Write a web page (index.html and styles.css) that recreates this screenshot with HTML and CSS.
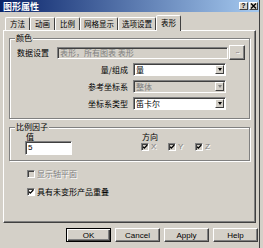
FILE: index.html
```html
<!DOCTYPE html>
<html lang="zh">
<head>
    <meta charset="utf-8">
    <title>图形属性</title>
    <link rel="stylesheet" href="styles.css">
</head>
<body>
<div class="window">
    <div class="titlebar">
        <span class="title">图形属性</span>
        <div class="tb-buttons">
            <span class="tb-btn help">?</span>
            <span class="tb-btn close">
                <svg width="7" height="6" viewBox="0 0 7 6"><path d="M1 0.5 L6 5.5 M6 0.5 L1 5.5" stroke="#000" stroke-width="1.4"/></svg>
            </span>
        </div>
    </div>

    <div class="main">
        <div class="tabs">
            <div class="tab">方法</div>
            <div class="tab">动画</div>
            <div class="tab">比例</div>
            <div class="tab">网格显示</div>
            <div class="tab">选项设置</div>
            <div class="tab active">表形</div>
        </div>

        <div class="pane">
            <!-- 颜色 -->
            <div class="group group-color">
                <div class="group-title">颜色</div>
                <div class="row">
                    <span class="lbl lbl-short">数据设置</span>
                    <div class="field disabled wide">表形，所有图表 表形</div>
                    <span class="btn browse">...</span>
                </div>
                <div class="row">
                    <span class="lbl lbl-right">量/组成</span>
                    <div class="combo">量<span class="arrow"></span></div>
                </div>
                <div class="row">
                    <span class="lbl lbl-right">参考坐标系</span>
                    <div class="combo disabled">整体<span class="arrow"></span></div>
                </div>
                <div class="row">
                    <span class="lbl lbl-right">坐标系类型</span>
                    <div class="combo">笛卡尔<span class="arrow"></span></div>
                </div>
            </div>

            <!-- 比例因子 -->
            <div class="group group-scale">
                <div class="group-title">比例因子</div>
                <div class="scale-cols">
                    <div class="col-value">
                        <div class="sub-lbl">值</div>
                        <div class="field value">5</div>
                    </div>
                    <div class="col-dir">
                        <div class="sub-lbl">方向</div>
                        <div class="checks">
                            <span class="check disabled"><span class="box on"></span>X</span>
                            <span class="check disabled"><span class="box on"></span>Y</span>
                            <span class="check disabled"><span class="box on"></span>Z</span>
                        </div>
                    </div>
                </div>
            </div>

            <div class="check-row">
                <span class="check disabled"><span class="box"></span>显示轴平面</span>
            </div>
            <div class="check-row second">
                <span class="check"><span class="box on"></span>具有未变形产品重叠</span>
            </div>
        </div>

        <div class="buttons">
            <span class="btn push default">OK</span>
            <span class="btn push">Cancel</span>
            <span class="btn push">Apply</span>
            <span class="btn push">Help</span>
        </div>
    </div>
</div>
</body>
</html>
```

FILE: styles.css
```css
body {
    margin: 0;
    background: #d4d0c8;
    font-family: "Noto Sans CJK SC", "DejaVu Sans", sans-serif;
    font-size: 8px;
    line-height: 9px;
    color: #000;
}

.window {
    width: 260px;
    height: 248px;
    box-sizing: border-box;
    border-right: 1px solid #404040;
    background: #d4d0c8;
}

/* title bar */
.titlebar {
    height: 12px;
    box-sizing: border-box;
    padding: 0 1px 0 3px;
    display: flex;
    align-items: center;
    justify-content: space-between;
    background: linear-gradient(to right, #0a246a, #a6caf0);
}

.title {
    color: #fff;
    font-weight: bold;
    font-size: 9px;
}

.tb-buttons {
    display: flex;
    gap: 1px;
}

.tb-btn {
    width: 9px;
    height: 8px;
    box-sizing: border-box;
    display: flex;
    align-items: center;
    justify-content: center;
    background: #d4d0c8;
    border: 1px solid;
    border-color: #fff #404040 #404040 #fff;
    font-family: "Liberation Sans", sans-serif;
    font-weight: bold;
    font-size: 7px;
    line-height: 6px;
}

/* tabs */
.main {
    padding: 3px 0 0 3px;
}

.tabs {
    display: flex;
    align-items: flex-end;
    height: 15px;
    padding-left: 2px;
}

.tab {
    height: 13px;
    min-width: 25px;
    padding: 0 3px;
    box-sizing: border-box;
    text-align: center;
    line-height: 12px;
    font-size: 7.5px;
    border: 1px solid;
    border-bottom: none;
    border-color: #fff #404040 transparent #fff;
    border-radius: 2px 2px 0 0;
}

.tab.active {
    height: 16px;
    margin-bottom: -1px;
    line-height: 13px;
    position: relative;
    z-index: 1;
    background: #d4d0c8;
}

.pane {
    width: 253px;
    height: 193px;
    box-sizing: border-box;
    padding: 1px 5px 0;
    border: 1px solid;
    border-color: #fff #404040 #404040 #fff;
    box-shadow: inset -1px -1px 0 #808080;
}

/* group boxes */
.group {
    border: 1px solid #808080;
    box-shadow: inset 1px 1px 0 #fff, 1px 1px 0 #fff;
    padding: 0 4px 7px 7px;
}

.group-title {
    display: table;
    margin: -6px 0 0 -2px;
    padding: 0 1px;
    height: 10px;
    line-height: 10px;
    background: #d4d0c8;
}

.group-color {
    margin-top: 6px;
}

.group-scale {
    margin-top: 8px;
    padding-bottom: 5px;
}

.row {
    display: flex;
    align-items: center;
    height: 15px;
    margin-top: 2px;
}

.row:first-of-type {
    margin-top: 0;
}

.lbl-short {
    width: 40px;
}

.lbl-right {
    width: 111px;
    margin-right: 5px;
    text-align: right;
}

/* sunken controls */
.field,
.combo,
.box {
    box-sizing: border-box;
    background: #fff;
    border: 1px solid;
    border-color: #808080 #fff #fff #808080;
    box-shadow: inset 1px 1px 0 #404040;
}

.field {
    height: 12px;
    padding: 0 2px;
    line-height: 10px;
}

.field.wide {
    flex: 1;
}

.field.disabled,
.combo.disabled {
    background: #d4d0c8;
    color: #808080;
}

.combo {
    width: 93px;
    height: 13px;
    padding: 0 2px;
    line-height: 11px;
    display: flex;
    justify-content: space-between;
    align-items: center;
}

.arrow {
    width: 9px;
    height: 9px;
    box-sizing: border-box;
    margin-right: -1px;
    background: #d4d0c8;
    border: 1px solid;
    border-color: #fff #404040 #404040 #fff;
    display: flex;
    align-items: center;
    justify-content: center;
}

.arrow:after {
    content: '';
    border-left: 2.5px solid transparent;
    border-right: 2.5px solid transparent;
    border-top: 3px solid #000;
}

.combo.disabled .arrow:after {
    border-top-color: #808080;
}

/* raised buttons */
.btn {
    box-sizing: border-box;
    background: #d4d0c8;
    border: 1px solid;
    border-color: #fff #404040 #404040 #fff;
    box-shadow: inset -1px -1px 0 #808080;
    display: flex;
    align-items: center;
    justify-content: center;
}

.browse {
    width: 16px;
    height: 15px;
    margin-left: 1px;
    padding-bottom: 2px;
    font-family: "DejaVu Sans", sans-serif;
    font-size: 7px;
    letter-spacing: -1px;
    color: #808080;
    text-shadow: 1px 1px 0 #fff;
}

/* scale factor */
.scale-cols {
    display: flex;
}

.col-value {
    margin-left: 8px;
    width: 47px;
}

.col-dir {
    margin-left: 69px;
}

.sub-lbl {
    padding-left: 1px;
}

.field.value {
    height: 14px;
    line-height: 12px;
    font-family: "Liberation Sans", sans-serif;
}

.checks {
    display: flex;
    margin-top: 1px;
}

.checks .check {
    width: 27px;
    font-family: "Liberation Sans", sans-serif;
}

/* check boxes */
.check {
    display: flex;
    align-items: center;
    gap: 2px;
}

.box {
    width: 8px;
    height: 8px;
    flex: none;
}

.box.on {
    background: #fff url("data:image/svg+xml,%3Csvg xmlns='http://www.w3.org/2000/svg' width='6' height='6' viewBox='0 0 6 6'%3E%3Cpath d='M0.8 2.6 L2.3 4.1 L5.3 1' fill='none' stroke='%23000' stroke-width='1.3'/%3E%3C/svg%3E") no-repeat center;
}

.check.disabled {
    color: #808080;
    text-shadow: 1px 1px 0 #fff;
}

.check.disabled .box {
    background-color: #d4d0c8;
}

.check-row {
    margin: 8px 0 0 18px;
}

.check-row.second {
    margin-top: 9px;
}

/* bottom buttons */
.buttons {
    display: flex;
    justify-content: flex-end;
    gap: 4px;
    margin-top: 5px;
    padding-right: 1px;
}

.push {
    width: 45px;
    height: 14px;
    font-family: "Liberation Sans", sans-serif;
    font-size: 8px;
}

.push.default {
    border-color: #000;
    box-shadow: inset 1px 1px 0 #fff, inset -1px -1px 0 #404040, inset -2px -2px 0 #808080;
}
```
